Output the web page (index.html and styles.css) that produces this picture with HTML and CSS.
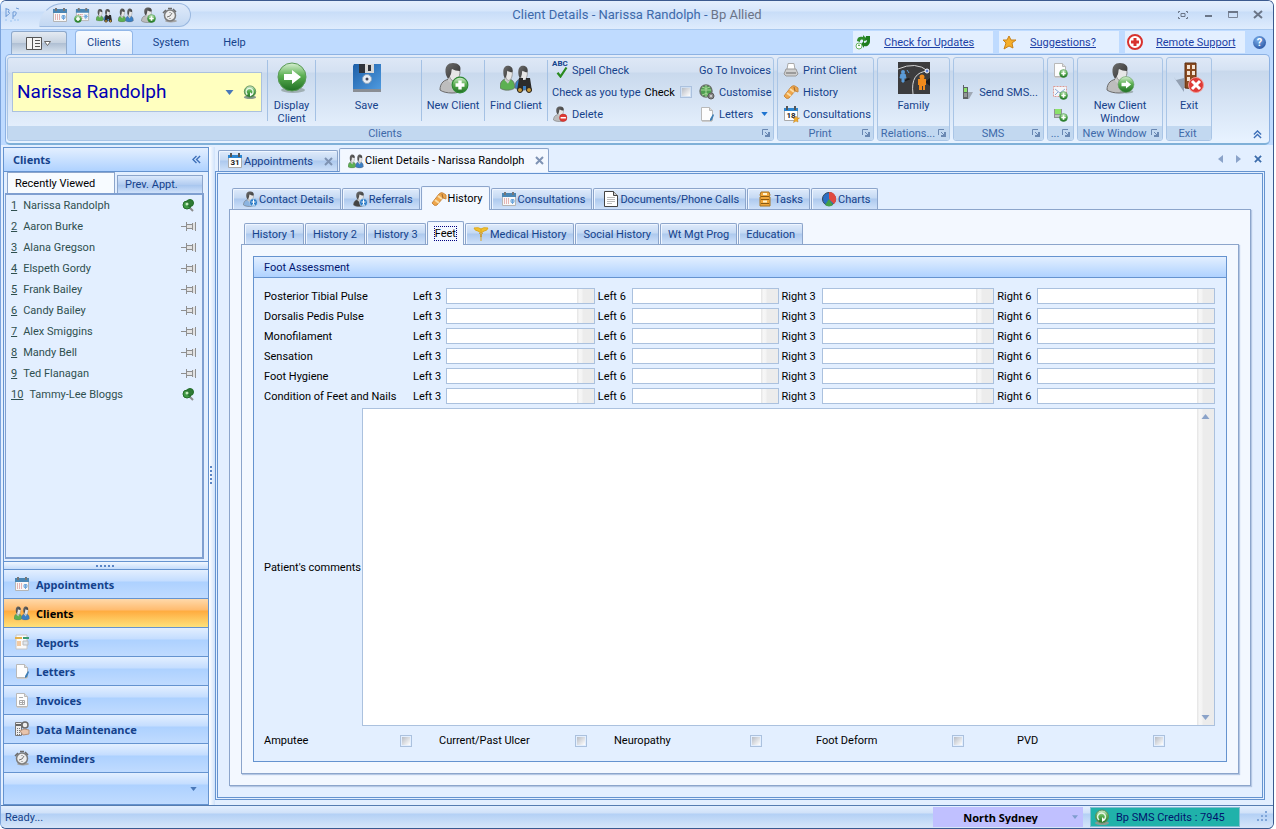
FILE: index.html
```html
<!DOCTYPE html>
<html lang="en">
<head>
    <meta charset="UTF-8">
    <meta name="viewport" content="width=device-width, initial-scale=1.0">
    <title>Client Details - Narissa Randolph - Bp Allied</title>
    <link rel="stylesheet" href="styles.css">
</head>
<body>
    <!-- Icon set -->
    <svg class="icon-defs" aria-hidden="true">
        <defs>
            <linearGradient id="gGreen" x1="0" y1="0" x2="0" y2="1">
                <stop offset="0" stop-color="#d9f0d4"/>
                <stop offset="0.45" stop-color="#5cb052"/>
                <stop offset="1" stop-color="#1f6f23"/>
            </linearGradient>
            <linearGradient id="gFloppy" x1="0" y1="0" x2="1" y2="1">
                <stop offset="0" stop-color="#1d5fa8"/>
                <stop offset="1" stop-color="#4f9be0"/>
            </linearGradient>
            <linearGradient id="gHair" x1="0" y1="0" x2="1" y2="1">
                <stop offset="0" stop-color="#6e6e6e"/>
                <stop offset="1" stop-color="#2e2e2e"/>
            </linearGradient>
        </defs>

        <symbol id="person" viewBox="0 0 32 32" preserveAspectRatio="none">
            <path d="M3 28c0-7 4-11 12-11s12 4 12 11c-5 4-19 4-24 0z" fill="currentColor" stroke="#6a6a6a"/>
            <path d="M11 14h8v5l-3 4-5-4z" fill="#c9c9c9"/>
            <path d="M12 6c3-4 11-3 11 4 0 5-3 9-6 9s-5-4-5-8z" fill="#e6e6e6" stroke="#8a8a8a"/>
            <path d="M9 13C7 4 11 1 16 1s9 3 7 8c-3 0-6-1-8-2-1 2 0 4-2 7l-2 3z" fill="url(#gHair)"/>
        </symbol>
        <symbol id="plus" viewBox="0 0 16 16">
            <circle cx="8" cy="8" r="7" fill="url(#gGreen)" stroke="#2f8a35"/>
            <path d="M8 4v8M4 8h8" stroke="#fff" stroke-width="3"/>
        </symbol>
        <symbol id="go" viewBox="0 0 32 32">
            <ellipse cx="17" cy="28" rx="12" ry="3" fill="#8a9a98" opacity="0.7"/>
            <circle cx="16" cy="15" r="14" fill="url(#gGreen)" stroke="#5a9a58"/>
            <path d="M8 12h8V8l9 7-9 7v-4H8z" fill="#fff"/>
        </symbol>
        <symbol id="minus" viewBox="0 0 16 16">
            <circle cx="8" cy="8" r="7" fill="#e03a34" stroke="#b92a25"/>
            <path d="M3 8h10" stroke="#fff" stroke-width="3"/>
        </symbol>
        <symbol id="person-add" viewBox="0 0 32 32">
            <use href="#person" color="#bdbdbd"/>
            <use href="#plus" x="14" y="14" width="18" height="18"/>
        </symbol>
        <symbol id="person-go" viewBox="0 0 32 32">
            <use href="#person" color="#bdbdbd"/>
            <use href="#go" x="13" y="14" width="18" height="18"/>
        </symbol>
        <symbol id="person-del" viewBox="0 0 32 32">
            <use href="#person" color="#bdbdbd"/>
            <use href="#minus" x="14" y="15" width="17" height="17"/>
        </symbol>
        <symbol id="person-phone" viewBox="0 0 32 32">
            <use href="#person"/>
            <circle cx="23" cy="23" r="8" fill="#2f7ec9" stroke="#fff"/>
            <path d="M23 17v10M19 22h8M20 28h6" stroke="#fff" stroke-width="2"/>
        </symbol>
        <symbol id="people" viewBox="0 0 32 32">
            <use href="#person" color="#5cb052" x="-2" y="2" width="21" height="29"/>
            <use href="#person" color="#3a7fc4" x="13" y="2" width="21" height="29"/>
        </symbol>
        <symbol id="find" viewBox="0 0 32 32">
            <use href="#person" color="#5cb052" x="-2" y="3" width="20" height="26"/>
            <use href="#person" color="#3a7fc4" x="13" y="3" width="20" height="26"/>
            <path d="M19 16h4v2h3v-2h4l2 13h-6v-5h-3v5h-6z" fill="#2b2b2b"/>
            <circle cx="20" cy="28" r="2.500" fill="#c79a3d" stroke="#222"/>
            <circle cx="29" cy="28" r="2.500" fill="#c79a3d" stroke="#222"/>
        </symbol>
        <symbol id="calendar" viewBox="0 0 16 16">
            <path d="M1.500 3.500h13v11h-13z" fill="#f8f8f8" stroke="#b5b5b5"/>
            <path d="M1 2h14v4H1z" fill="#4a86b4"/>
            <path d="M4 1v3M12 1v3" stroke="#777" stroke-width="2"/>
            <path d="M3 8h1M5 8h1M7 8h1M3 10h1M5 10h1M7 10h1M3 12h1M5 12h1M7 12h1" stroke="#d07070"/>
            <path d="M9 10h5M11.500 8v5M10 8l3 4M13 8l-3 4" stroke="#6ba5dc"/>
        </symbol>
        <symbol id="calendar-add" viewBox="0 0 16 16">
            <use href="#calendar" x="1" width="15" height="15"/>
            <use href="#plus" y="8" width="8" height="8"/>
        </symbol>
        <symbol id="day" viewBox="0 0 16 16">
            <path d="M1.500 2.500h13v12h-13z" fill="#fff" stroke="#aaa"/>
            <path d="M1 2h14v3H1z" fill="#2c86d0"/>
            <path d="M4 0v4M12 0v4" stroke="#555" stroke-width="2"/>
        </symbol>
        <symbol id="clock" viewBox="0 0 16 16">
            <ellipse cx="9" cy="14" rx="6" ry="1.500" fill="#a5a5a5"/>
            <circle cx="8" cy="8.500" r="5.500" fill="#ededed" stroke="#7c7c7c" stroke-width="1.500"/>
            <path d="M1 6l3-3M11 2l3 3M6 1.500h4" stroke="#6b6b6b" stroke-width="1.500"/>
            <path d="M5 10l3-1 2-3M8 5v1M8 11v1" stroke="#777" fill="none"/>
        </symbol>
        <symbol id="refresh" viewBox="0 0 16 16">
            <path d="M2 7c0-4 3-5 6-4V1l4 4-4 3V6C6 5 5 6 5 8z" fill="#2f8c2a"/>
            <path d="M11 2h4v5c0 4-3 6-6 5v2l-3-4 3-3v2c2 0 3-1 3-3l-2 1z" fill="#1f7d1e"/>
            <circle cx="4" cy="12" r="3" fill="#fff" stroke="#6bb566"/>
            <path d="M3 12l1-2 1 2z" fill="#2f8c2a"/>
        </symbol>
        <symbol id="sms-ball" viewBox="0 0 16 16">
            <ellipse cx="8" cy="14" rx="7" ry="2" fill="#8a9a90"/>
            <circle cx="8" cy="7.500" r="6.500" fill="url(#gGreen)" stroke="#5c8c5d"/>
            <path d="M5 11a4 4 0 1 1 5 0" fill="none" stroke="#e8f5e6" stroke-width="1.500"/>
            <path d="M8 8l3 3-3 2z" fill="#fff"/>
        </symbol>
        <symbol id="floppy" viewBox="0 0 32 32">
            <path d="M3 2h27v26H2V4z" fill="url(#gFloppy)"/>
            <path d="M2 27h28v3H2z" fill="#8a8e94"/>
            <path d="M8 2h15v9H8z" fill="#d8d8d8"/>
            <path d="M8 2h6v9H8zM17 3h3v6h-3z" fill="#30343c"/>
            <circle cx="16" cy="17" r="4.500" fill="#e8eef5" stroke="#8fa7c0"/>
            <circle cx="16" cy="17" r="1.500" fill="#445"/>
        </symbol>
        <symbol id="tick" viewBox="0 0 16 16">
            <path d="M2 9l4 5L14 2" fill="none" stroke="#2a8a1f" stroke-width="3"/>
        </symbol>
        <symbol id="globe" viewBox="0 0 16 16">
            <circle cx="7" cy="7" r="6" fill="#4f9f50" stroke="#6a726a" stroke-width="1.500"/>
            <path d="M2 6h10M7 1v12M3 3q4 3 8 0M3 11q4-3 8 0" fill="none" stroke="#a8d898"/>
            <circle cx="12" cy="12" r="3" fill="#8a8a8a" stroke="#5a5a5a"/>
            <circle cx="12" cy="12" r="1" fill="#ddd"/>
        </symbol>
        <symbol id="page" viewBox="0 0 16 16">
            <path d="M2.500 1.500h8l3 3v10h-11z" fill="#fdfdfd" stroke="#b9b9b9"/>
            <path d="M10.500 1.500v3h3" fill="#ddd" stroke="#b9b9b9"/>
            <path d="M3 15.500h10" stroke="#ccc"/>
        </symbol>
        <symbol id="page-pen" viewBox="0 0 16 16">
            <use href="#page"/>
            <path d="M15 9l-2 5-2 1v-2l3-5z" fill="#3f7fb5"/>
        </symbol>
        <symbol id="page-lines" viewBox="0 0 16 16">
            <path d="M1.500 0.500h9l4 4v11h-13z" fill="#fff" stroke="#444"/>
            <path d="M10.500 0.500v4h4" fill="#ccc" stroke="#444"/>
            <path d="M4 6.500h8M4 8.500h8M4 10.500h8M4 12.500h5" stroke="#bbb"/>
        </symbol>
        <symbol id="page-add" viewBox="0 0 16 16">
            <use href="#page"/>
            <use href="#plus" x="7" y="7" width="9" height="9"/>
        </symbol>
        <symbol id="mail-add" viewBox="0 0 16 16">
            <path d="M1.500 2.500h13v10h-13z" fill="#f4f6fa" stroke="#dc9a94" stroke-dasharray="2 1"/>
            <path d="M3 5l5 4 5-4M3 11l3-3" fill="none" stroke="#8ba9d4"/>
            <use href="#plus" x="7" y="7" width="9" height="9"/>
        </symbol>
        <symbol id="phone" viewBox="0 0 16 16">
            <path d="M9 8h5l-4 7H8z" fill="#9fa8b4"/>
            <path d="M4 1h1v2h4v12H4z" fill="#5d6364"/>
            <path d="M5 4h3v4H5z" fill="#8be26a"/>
            <path d="M5 10h3M5 12h3" stroke="#ccc"/>
        </symbol>
        <symbol id="phone-add" viewBox="0 0 16 16">
            <path d="M2 3h8v9H2z" fill="#8d9394"/>
            <path d="M3 3h6v5H3z" fill="#8be26a"/>
            <path d="M3 10h5" stroke="#eee"/>
            <use href="#plus" x="7" y="7" width="9" height="9"/>
        </symbol>
        <symbol id="printer" viewBox="0 0 16 16">
            <path d="M5 1.500h6l1 6H4z" fill="#fff" stroke="#aaa"/>
            <path d="M3 7h10l2 5-2 2H3l-2-2z" fill="#cfcfcf" stroke="#9a9a9a"/>
            <path d="M3 11h10" stroke="#888" stroke-width="1.500"/>
        </symbol>
        <symbol id="scroll" viewBox="0 0 16 16">
            <path d="M1 12L8 3q2-2 4-1l3 2v4l-3-1-6 7q-2 1-3 0z" fill="#efa64a" stroke="#c78a44"/>
            <path d="M4 9l4 3M7 5l4 3" stroke="#fbdca4" stroke-width="2"/>
            <path d="M11 3l1 4" stroke="#9a6a34"/>
        </symbol>
        <symbol id="family" viewBox="0 0 32 32">
            <path d="M0 0h32v32H0z" fill="#3c3c3e"/>
            <path d="M0 7Q18 -1 30 9M30 9Q12 10 15 32" fill="none" stroke="#d5d5d5"/>
            <path d="M5 20l5-4 3 1zM27 20l5-4v8z" fill="#1c1c1e"/>
            <circle cx="24" cy="15" r="2.500" fill="#f08a1c"/>
            <path d="M20 17h8v6h-1v5h-2v-4h-1v4h-3v-5h-1z" fill="#f08a1c"/>
            <circle cx="5" cy="10" r="2" fill="#5b9bd8"/>
            <path d="M3 12h4l1 4H6v4H4v-4H2zM9 8l2 3" fill="#5b9bd8" stroke="#5b9bd8"/>
            <circle cx="29" cy="9" r="2" fill="#5b7fd8" stroke="#fff"/>
        </symbol>
        <symbol id="exit" viewBox="0 0 32 32">
            <path d="M0 14l3 4 8-2v14z" fill="#93a0b2"/>
            <path d="M12 1h11v26l-11-1z" fill="#8a4a20" stroke="#5d2e10"/>
            <path d="M14 3h3v4h-3zM19 3h3v4h-3zM14 9h3v4h-3zM19 9h3v4h-3zM14 15h3v4h-3z" fill="#f5e4d4"/>
            <circle cx="23" cy="23" r="7.500" fill="#de3a36" stroke="#f09a94"/>
            <path d="M19 19l8 8M27 19l-8 8" stroke="#fff" stroke-width="3"/>
        </symbol>
        <symbol id="star" viewBox="0 0 16 16">
            <path d="M8 2l2 4h5l-4 3 1 5-4-2-5 3 2-6-3-3h4z" fill="#f5ae2a" stroke="#c98218"/>
        </symbol>
        <symbol id="lifebuoy" viewBox="0 0 16 16">
            <circle cx="8" cy="8" r="7" fill="#fff" stroke="#d8322e" stroke-width="2"/>
            <path d="M8 4v8M4 8h8" stroke="#d8322e" stroke-width="3"/>
        </symbol>
        <symbol id="pin-on" viewBox="0 0 13 13">
            <path d="M7 8l4 4" stroke="#8a8a8a" stroke-width="2"/>
            <circle cx="5" cy="6" r="4" fill="#3f9a45" stroke="#226d28"/>
            <circle cx="8" cy="4" r="3.500" fill="#2f7a35" stroke="#226d28"/>
            <circle cx="5" cy="5" r="1.500" fill="#c4ecbc"/>
        </symbol>
        <symbol id="pin-off" viewBox="0 0 15 11">
            <path d="M6 4h6v3H6zM12 2h2v7h-2z" fill="#e2e2e2"/>
            <path d="M0 5.500h5M5.500 1v9M6 3.500h6M6 7.500h6M11.500 2v7M14.500 1v9" stroke="#8f8f8f"/>
        </symbol>
        <symbol id="report" viewBox="0 0 16 16">
            <path d="M2 1h11v14H2z" fill="#fafafa" stroke="#c6c6c6"/>
            <path d="M1 3h7v2H1z" fill="#e3b04a"/>
            <path d="M9 3h6v2H9z" fill="#3c9c74"/>
            <path d="M3 7h4v5H3z" fill="#f2c9a0"/>
            <path d="M9 7h5v4H9z" fill="#dfe6ee" stroke="#bbb"/>
        </symbol>
        <symbol id="invoice" viewBox="0 0 16 16">
            <use href="#page"/>
            <path d="M5 5.500h4M5.500 8.500h5v4h-5zM8.500 9v4M6 10.500h5" fill="none" stroke="#aaa"/>
        </symbol>
        <symbol id="data" viewBox="0 0 16 16">
            <path d="M1.500 1.500h6v13h-6z" fill="#eee" stroke="#777"/>
            <path d="M2 4h5" stroke="#666" stroke-width="2"/>
            <path d="M3 7.500h4M3 9.500h4M3 11.500h4M3 13.500h4" stroke="#777" stroke-dasharray="1 1"/>
            <circle cx="11" cy="4" r="3" fill="#eee" stroke="#6a6a6a" stroke-width="1.500"/>
            <path d="M6 10l4-2 5 1v4l-6 1z" fill="#e8c4ac" stroke="#b59078"/>
        </symbol>
        <symbol id="caduceus" viewBox="0 0 16 16">
            <path d="M1 2q5-1 7 1 2-2 7-1-1 3-4 3l-3 2-3-2Q2 5 1 2z" fill="#f2c12e" stroke="#dca820"/>
            <path d="M8 3v12" stroke="#d8a422"/>
            <path d="M6 7q4 2 1 4M10 7q-4 2-1 4" fill="none" stroke="#c99b3a"/>
        </symbol>
        <symbol id="cabinet" viewBox="0 0 16 16">
            <path d="M4 1h8l1 3-1 2h1v9H3V6h1L3 4z" fill="#f0a63a" stroke="#a67424"/>
            <path d="M4 5.500h8M4 8.500h8M4 12.500h8" stroke="#8a5a12"/>
            <path d="M6 3h4M6 10.500h4" stroke="#fff2cc" stroke-width="2"/>
        </symbol>
        <symbol id="pie" viewBox="0 0 16 16">
            <circle cx="8" cy="8" r="6.500" fill="#2c6fc4" stroke="#345"/>
            <path d="M8 8V1a7 7 0 0 1 5 12z" fill="#e04a40"/>
            <path d="M8 8l4 6a7 7 0 0 1-8 0z" fill="#44a048"/>
        </symbol>
        <symbol id="launcher" viewBox="0 0 8 8">
            <path d="M0.500 6V0.500H6" fill="none" stroke="#6a88b2"/>
            <path d="M3 3h1v1h1v1h1V3h2v5H3V6h2V5H4V4H3z" fill="#6a88b2"/>
        </symbol>
        <symbol id="down" viewBox="0 0 8 5">
            <path d="M0 0h8L4 5z" fill="currentColor"/>
        </symbol>
        <symbol id="close" viewBox="0 0 9 9">
            <path d="M1 1l7 7M8 1L1 8" stroke="currentColor" stroke-width="2"/>
        </symbol>
        <symbol id="chevrons" viewBox="0 0 10 10">
            <path d="M5 1L1 5l4 4M9 1L5 5l4 4" fill="none" stroke="currentColor" stroke-width="1.500"/>
        </symbol>
    </svg>

    <div class="window">
        <header class="titlebar">
            <div class="titlebar-left">
                <svg class="app-logo" viewBox="0 0 20 16">
                    <path d="M2 1v9M2 2q5 0 2 3 4 1-2 4M9 12V5q4-1 3 2t-3 2M12 1l3 1" fill="none" stroke="#6f9bd6"/>
                    <path d="M1 13h2M6 14h2M10 13h2M14 12v2" stroke="#9cc4f2"/>
                </svg>
                <div class="quick-access">
                    <button type="button" aria-label="Appointments"><svg class="icon"><use href="#calendar"/></svg></button>
                    <button type="button" aria-label="New appointment"><svg class="icon"><use href="#calendar-add"/></svg></button>
                    <button type="button" aria-label="Find client"><svg class="icon"><use href="#find"/></svg></button>
                    <button type="button" aria-label="Clients"><svg class="icon"><use href="#people"/></svg></button>
                    <button type="button" aria-label="New client"><svg class="icon"><use href="#person-add"/></svg></button>
                    <button type="button" aria-label="Reminders"><svg class="icon"><use href="#clock"/></svg></button>
                </div>
            </div>
            <h1>Client Details - Narissa Randolph - <span>Bp Allied</span></h1>
            <div class="window-buttons">
                <button type="button" aria-label="Full screen"><svg viewBox="0 0 10 10"><path d="M0.500 3V1.500H2M8 1.500h1.500V3M0.500 7v1.500H2M8 8.500h1.500V7M3 3.500h4v3H3z" fill="none" stroke="#6b7688"/></svg></button>
                <button type="button" aria-label="Minimise"><svg viewBox="0 0 10 10"><path d="M2 6h7" stroke="#6b7688" stroke-width="2"/></svg></button>
                <button type="button" aria-label="Maximise"><svg viewBox="0 0 10 10"><path d="M0.500 2v5.500h9V2" fill="none" stroke="#7b8698"/><path d="M0 2h10" stroke="#6b7688" stroke-width="2"/></svg></button>
                <button type="button" aria-label="Close"><svg viewBox="0 0 10 10"><path d="M1 1l8 7M9 1L1 8" stroke="#6b7688" stroke-width="2"/></svg></button>
            </div>
        </header>

        <nav class="ribbon-tabs">
            <button type="button" class="app-menu" aria-label="Application menu">
                <svg viewBox="0 0 26 13">
                    <path d="M0.500 0.500h15v12H0.500zM6.500 0v13" fill="#f4f4f4" stroke="#555"/>
                    <path d="M9 3.500h5M9 6.500h5M9 9.500h5" stroke="#555"/>
                    <path d="M18.500 4.500h6l-3 4z" fill="#fff" stroke="#666"/>
                </svg>
            </button>
            <button type="button" class="ribbon-tab active">Clients</button>
            <button type="button" class="ribbon-tab">System</button>
            <button type="button" class="ribbon-tab">Help</button>
            <div class="support-links">
                <div class="support wide"><svg class="icon"><use href="#refresh"/></svg><a href="#">Check for Updates</a></div>
                <div class="support"><svg class="icon"><use href="#star"/></svg><a href="#">Suggestions?</a></div>
                <div class="support"><svg class="icon"><use href="#lifebuoy"/></svg><a href="#">Remote Support</a></div>
                <button type="button" class="help">?</button>
            </div>
        </nav>

        <section class="ribbon">
            <div class="group group-clients">
                <div class="group-body">
                    <div class="client-combo">
                        <select aria-label="Client">
                            <option>Narissa Randolph</option>
                        </select>
                        <svg class="arrow"><use href="#down"/></svg>
                        <svg class="icon"><use href="#sms-ball"/></svg>
                    </div>
                    <button type="button" class="big display-client"><svg><use href="#go"/></svg>Display<br>Client</button>
                    <button type="button" class="big save"><svg><use href="#floppy"/></svg>Save</button>
                    <button type="button" class="big new-client"><svg><use href="#person-add"/></svg>New Client</button>
                    <button type="button" class="big new-client"><svg><use href="#find"/></svg>Find Client</button>
                    <div class="small-stack tools">
                        <button type="button" class="spell"><span class="abc">ABC</span><svg class="icon"><use href="#tick"/></svg>Spell Check</button>
                        <label class="check-type">Check as you type <span>Check</span><input type="checkbox"></label>
                        <button type="button"><svg class="icon"><use href="#person-del"/></svg>Delete</button>
                    </div>
                    <div class="small-stack goto">
                        <button type="button">Go To Invoices</button>
                        <button type="button"><svg class="icon"><use href="#globe"/></svg>Customise</button>
                        <button type="button"><svg class="icon"><use href="#page-pen"/></svg>Letters <svg class="arrow"><use href="#down"/></svg></button>
                    </div>
                </div>
                <div class="group-caption"><span>Clients</span><svg><use href="#launcher"/></svg></div>
            </div>

            <div class="group group-print">
                <div class="group-body">
                    <div class="small-stack">
                        <button type="button"><svg class="icon"><use href="#printer"/></svg>Print Client</button>
                        <button type="button"><svg class="icon"><use href="#scroll"/></svg>History</button>
                        <button type="button"><span class="day-icon"><svg class="icon"><use href="#day"/></svg><b>18</b><svg class="mark"><use href="#star"/></svg></span>Consultations</button>
                    </div>
                </div>
                <div class="group-caption"><span>Print</span><svg><use href="#launcher"/></svg></div>
            </div>

            <div class="group group-family">
                <div class="group-body">
                    <button type="button" class="big"><svg><use href="#family"/></svg>Family</button>
                </div>
                <div class="group-caption"><span>Relations...</span><svg><use href="#launcher"/></svg></div>
            </div>

            <div class="group group-sms">
                <div class="group-body">
                    <button type="button" class="send"><svg class="icon"><use href="#phone"/></svg>Send SMS...</button>
                </div>
                <div class="group-caption"><span>SMS</span><svg><use href="#launcher"/></svg></div>
            </div>

            <div class="group group-more">
                <div class="group-body">
                    <div class="small-stack">
                        <button type="button" aria-label="New document"><svg class="icon"><use href="#page-add"/></svg></button>
                        <button type="button" aria-label="New email"><svg class="icon"><use href="#mail-add"/></svg></button>
                        <button type="button" aria-label="New phone call"><svg class="icon"><use href="#phone-add"/></svg></button>
                    </div>
                </div>
                <div class="group-caption"><span>...</span><svg><use href="#launcher"/></svg></div>
            </div>

            <div class="group group-window">
                <div class="group-body">
                    <button type="button" class="big"><svg><use href="#person-go"/></svg>New Client<br>Window</button>
                </div>
                <div class="group-caption"><span>New Window</span><svg><use href="#launcher"/></svg></div>
            </div>

            <div class="group group-exit">
                <div class="group-body">
                    <button type="button" class="big"><svg><use href="#exit"/></svg>Exit</button>
                </div>
                <div class="group-caption"><span>Exit</span></div>
            </div>

            <button type="button" class="collapse-ribbon" aria-label="Collapse ribbon"><svg><use href="#chevrons"/></svg></button>
        </section>

        <main class="workspace">
            <aside class="sidebar">
                <div class="sidebar-header"><h2>Clients</h2><button type="button" aria-label="Collapse"><svg><use href="#chevrons"/></svg></button></div>
                <div class="sidebar-tabs">
                    <button type="button" class="active">Recently Viewed</button>
                    <button type="button">Prev. Appt.</button>
                </div>
                <ul class="recent">
                    <li><u>1</u><a href="#">Narissa Randolph</a><svg class="pin on"><use href="#pin-on"/></svg></li>
                    <li><u>2</u><a href="#">Aaron Burke</a><svg class="pin"><use href="#pin-off"/></svg></li>
                    <li><u>3</u><a href="#">Alana Gregson</a><svg class="pin"><use href="#pin-off"/></svg></li>
                    <li><u>4</u><a href="#">Elspeth Gordy</a><svg class="pin"><use href="#pin-off"/></svg></li>
                    <li><u>5</u><a href="#">Frank Bailey</a><svg class="pin"><use href="#pin-off"/></svg></li>
                    <li><u>6</u><a href="#">Candy Bailey</a><svg class="pin"><use href="#pin-off"/></svg></li>
                    <li><u>7</u><a href="#">Alex Smiggins</a><svg class="pin"><use href="#pin-off"/></svg></li>
                    <li><u>8</u><a href="#">Mandy Bell</a><svg class="pin"><use href="#pin-off"/></svg></li>
                    <li><u>9</u><a href="#">Ted Flanagan</a><svg class="pin"><use href="#pin-off"/></svg></li>
                    <li><u>10</u><a href="#">Tammy-Lee Bloggs</a><svg class="pin on"><use href="#pin-on"/></svg></li>
                </ul>
                <div class="grip"></div>
                <nav class="nav-bar">
                    <button type="button"><svg class="icon"><use href="#calendar"/></svg>Appointments</button>
                    <button type="button" class="active"><svg class="icon"><use href="#people"/></svg>Clients</button>
                    <button type="button"><svg class="icon"><use href="#report"/></svg>Reports</button>
                    <button type="button"><svg class="icon"><use href="#page-pen"/></svg>Letters</button>
                    <button type="button"><svg class="icon"><use href="#invoice"/></svg>Invoices</button>
                    <button type="button"><svg class="icon"><use href="#data"/></svg>Data Maintenance</button>
                    <button type="button"><svg class="icon"><use href="#clock"/></svg>Reminders</button>
                    <div class="nav-more"><svg class="arrow"><use href="#down"/></svg></div>
                </nav>
            </aside>

            <div class="splitter"></div>

            <div class="documents">
                <div class="doc-tabs">
                    <button type="button" class="tab"><span class="day-icon"><svg class="icon"><use href="#day"/></svg><b>31</b></span>Appointments<svg class="close"><use href="#close"/></svg></button>
                    <button type="button" class="tab active"><svg class="icon"><use href="#people"/></svg>Client Details - Narissa Randolph<svg class="close"><use href="#close"/></svg></button>
                    <div class="doc-nav">
                        <svg viewBox="0 0 5 8"><path d="M5 0v8L0 4z" fill="#8ba3c9"/></svg>
                        <svg viewBox="0 0 5 8"><path d="M0 0v8l5-4z" fill="#8ba3c9"/></svg>
                        <svg class="close"><use href="#close"/></svg>
                    </div>
                </div>

                <div class="doc-frame">
                    <div class="tabs">
                        <button type="button" class="tab"><svg class="icon blue"><use href="#person-phone"/></svg>Contact Details</button>
                        <button type="button" class="tab"><svg class="icon dark"><use href="#person-phone"/></svg>Referrals</button>
                        <button type="button" class="tab active"><svg class="icon"><use href="#scroll"/></svg>History</button>
                        <button type="button" class="tab"><svg class="icon"><use href="#calendar"/></svg>Consultations</button>
                        <button type="button" class="tab"><svg class="icon"><use href="#page-lines"/></svg>Documents/Phone Calls</button>
                        <button type="button" class="tab"><svg class="icon"><use href="#cabinet"/></svg>Tasks</button>
                        <button type="button" class="tab"><svg class="icon"><use href="#pie"/></svg>Charts</button>
                    </div>
                    <div class="panel">
                        <div class="tabs">
                            <button type="button" class="tab">History 1</button>
                            <button type="button" class="tab">History 2</button>
                            <button type="button" class="tab">History 3</button>
                            <button type="button" class="tab active"><span class="focused">Feet</span></button>
                            <button type="button" class="tab"><svg class="icon"><use href="#caduceus"/></svg>Medical History</button>
                            <button type="button" class="tab">Social History</button>
                            <button type="button" class="tab">Wt Mgt Prog</button>
                            <button type="button" class="tab">Education</button>
                        </div>
                        <div class="panel">
                            <form class="assessment">
                                <h3>Foot Assessment</h3>
                                <div class="readings">
                                    <span>Posterior Tibial Pulse</span>
                                    <label for="ptp-l3">Left 3</label><input type="text" id="ptp-l3">
                                    <label for="ptp-l6">Left 6</label><input type="text" id="ptp-l6">
                                    <label for="ptp-r3">Right 3</label><input type="text" id="ptp-r3">
                                    <label for="ptp-r6">Right 6</label><input type="text" id="ptp-r6">

                                    <span>Dorsalis Pedis Pulse</span>
                                    <label for="dpp-l3">Left 3</label><input type="text" id="dpp-l3">
                                    <label for="dpp-l6">Left 6</label><input type="text" id="dpp-l6">
                                    <label for="dpp-r3">Right 3</label><input type="text" id="dpp-r3">
                                    <label for="dpp-r6">Right 6</label><input type="text" id="dpp-r6">

                                    <span>Monofilament</span>
                                    <label for="mono-l3">Left 3</label><input type="text" id="mono-l3">
                                    <label for="mono-l6">Left 6</label><input type="text" id="mono-l6">
                                    <label for="mono-r3">Right 3</label><input type="text" id="mono-r3">
                                    <label for="mono-r6">Right 6</label><input type="text" id="mono-r6">

                                    <span>Sensation</span>
                                    <label for="sens-l3">Left 3</label><input type="text" id="sens-l3">
                                    <label for="sens-l6">Left 6</label><input type="text" id="sens-l6">
                                    <label for="sens-r3">Right 3</label><input type="text" id="sens-r3">
                                    <label for="sens-r6">Right 6</label><input type="text" id="sens-r6">

                                    <span>Foot Hygiene</span>
                                    <label for="hyg-l3">Left 3</label><input type="text" id="hyg-l3">
                                    <label for="hyg-l6">Left 6</label><input type="text" id="hyg-l6">
                                    <label for="hyg-r3">Right 3</label><input type="text" id="hyg-r3">
                                    <label for="hyg-r6">Right 6</label><input type="text" id="hyg-r6">

                                    <span>Condition of Feet and Nails</span>
                                    <label for="cond-l3">Left 3</label><input type="text" id="cond-l3">
                                    <label for="cond-l6">Left 6</label><input type="text" id="cond-l6">
                                    <label for="cond-r3">Right 3</label><input type="text" id="cond-r3">
                                    <label for="cond-r6">Right 6</label><input type="text" id="cond-r6">
                                </div>
                                <div class="comments">
                                    <label for="comments">Patient's comments</label>
                                    <div class="comments-box">
                                        <textarea id="comments"></textarea>
                                        <div class="scrollbar">
                                            <svg class="up"><use href="#down"/></svg>
                                            <svg><use href="#down"/></svg>
                                        </div>
                                    </div>
                                </div>
                                <div class="ticks">
                                    <label>Amputee<input type="checkbox"></label>
                                    <label>Current/Past Ulcer<input type="checkbox"></label>
                                    <label>Neuropathy<input type="checkbox"></label>
                                    <label>Foot Deform<input type="checkbox"></label>
                                    <label>PVD<input type="checkbox"></label>
                                </div>
                            </form>
                        </div>
                    </div>
                </div>
            </div>
        </main>

        <footer class="statusbar">
            <span>Ready...</span>
            <div class="location">
                <select aria-label="Location">
                    <option>North Sydney</option>
                </select>
                <svg class="arrow"><use href="#down"/></svg>
            </div>
            <div class="credits"><svg class="icon"><use href="#sms-ball"/></svg>Bp SMS Credits : 7945</div>
            <svg class="resize" viewBox="0 0 12 12"><path d="M9 1h2M9 5h2M9 9h2M5 5h2M5 9h2M1 9h2" stroke="#7fa5d8" stroke-width="2"/></svg>
        </footer>
    </div>
</body>
</html>
```
FILE: styles.css
```css
* {
    box-sizing: border-box;
}

body {
    margin: 0;
    background: #ffffff;
    color: #15428b;
    font-family: Roboto, "Noto Sans", sans-serif;
    font-size: 11px;
    line-height: 13px;
}

button,
input,
select,
textarea {
    font: inherit;
    color: inherit;
    margin: 0;
    padding: 0;
    border: none;
    background: none;
}

button {
    white-space: nowrap;
}

h1,
h2,
h3,
ul {
    margin: 0;
    padding: 0;
    font-size: 11px;
    font-weight: normal;
}

.icon-defs {
    position: absolute;
    width: 0;
    height: 0;
}

.icon {
    width: 16px;
    height: 16px;
    flex: none;
    color: #bdbdbd;
}

.icon.blue {
    color: #8cb4e0;
}

.icon.dark {
    color: #444444;
}

.arrow {
    width: 7px;
    height: 4px;
    flex: none;
    color: #4a78b8;
}

input[type="checkbox"] {
    appearance: none;
    width: 12px;
    height: 12px;
    flex: none;
    border: 1px solid #abc1de;
    background: linear-gradient(135deg, #b8bcc4, #ffffff) content-box #f4f4f4;
    padding: 1px;
}

.window {
    display: flex;
    flex-direction: column;
    height: 100vh;
    margin-right: 2px;
    border: 1px solid #3b5a8f;
    border-left-color: #7ba3dc;
    border-radius: 6px;
    background: #bfdbff;
    overflow: hidden;
}

/* Title bar */
.titlebar {
    display: grid;
    grid-template-columns: 1fr auto 1fr;
    align-items: center;
    height: 29px;
    flex: none;
    background: linear-gradient(#e4effd 0, #d6e6fb 10px, #c8ddf8 11px, #dfecfd 28px);
    border-bottom: 1px solid #a8c8ef;
}

.titlebar-left {
    display: flex;
    align-items: center;
}

.app-logo {
    width: 20px;
    height: 16px;
    margin-left: 3px;
}

.quick-access {
    display: flex;
    align-items: center;
    gap: 6px;
    height: 24px;
    margin-left: 15px;
    padding: 0 12px;
    border: 1px solid #9ab8e0;
    border-left-color: transparent;
    border-radius: 24px 12px 12px 0;
    background: linear-gradient(#dfeafa, #c3d8f2);
}

.quick-access button,
.window-buttons button {
    display: flex;
}

.titlebar h1 {
    font-size: 13px;
    line-height: 16px;
    color: #3e6aaa;
}

.titlebar h1 span {
    color: #6b7487;
}

.window-buttons {
    display: flex;
    justify-content: flex-end;
    gap: 15px;
    margin-right: 10px;
}

.window-buttons svg {
    width: 10px;
    height: 10px;
}

/* Ribbon tabs */
.ribbon-tabs {
    display: flex;
    align-items: flex-end;
    height: 24px;
    flex: none;
    padding-left: 10px;
}

.app-menu {
    width: 56px;
    height: 23px;
    margin-right: 8px;
    border: 1px solid #8ea9cc;
    border-bottom: none;
    border-radius: 3px 3px 0 0;
    background: linear-gradient(#e4eaf2, #c6d2e1 50%, #afbfd3 51%, #dbe6f2);
}

.app-menu svg {
    width: 26px;
    height: 13px;
    display: block;
    margin: 0 auto;
}

.ribbon-tab {
    height: 24px;
    padding: 0 17px;
}

.ribbon-tab.active {
    padding: 0 11px;
    margin-right: 3px;
    border: 1px solid #92b7e8;
    border-bottom: none;
    border-radius: 4px 4px 0 0;
    background: linear-gradient(#f6faff, #e4edf9);
}

.support-links {
    display: flex;
    align-items: center;
    gap: 6px;
    height: 22px;
    margin: auto 0 auto auto;
}

.support {
    display: flex;
    align-items: center;
    gap: 13px;
    width: 120px;
    height: 22px;
    padding-left: 2px;
    background: #e3efff;
}

.support.wide {
    width: 140px;
}

.support a {
    color: #1d3fa5;
}

.help {
    width: 13px;
    height: 13px;
    margin: 0 7px 0 2px;
    border-radius: 50%;
    background: radial-gradient(circle at 40% 30%, #7cb1ec, #173f92);
    color: #ffffff;
    font-weight: bold;
}

/* Ribbon */
.ribbon {
    position: relative;
    display: flex;
    gap: 3px;
    height: 91px;
    flex: none;
    margin: 0 3px 0 4px;
    padding: 2px 57px 2px 1px;
    border: 1px solid #8db2e3;
    border-bottom: 2px solid #7fb0d8;
    border-radius: 5px;
    background: linear-gradient(#e3ecf9, #d5e2f3 15px, #c8d8ec 16px, #e7f2ff 85px);
}

.group {
    display: flex;
    flex-direction: column;
    border: 1px solid #a9c5e6;
    border-radius: 3px;
    background: linear-gradient(#dee8f6, #d4e1f2 14px, #c9d9ed 15px, #e4effc 70px);
    overflow: hidden;
}

.group-body {
    display: flex;
    flex: 1;
    min-height: 0;
}

.group-caption {
    display: flex;
    align-items: center;
    height: 14px;
    flex: none;
    padding-right: 3px;
    background: #c2d8f0;
    color: #3e6aaa;
    white-space: nowrap;
}

.group-caption span {
    flex: 1;
    text-align: center;
}

.group-caption svg {
    width: 8px;
    height: 8px;
    flex: none;
}

.group-clients {
    flex: 1;
}

.group-print {
    width: 97px;
}

.group-family {
    width: 73px;
}

.group-sms {
    width: 91px;
}

.group-more {
    width: 27px;
}

.group-window {
    width: 86px;
}

.group-exit {
    width: 46px;
}

.big {
    display: flex;
    flex-direction: column;
    align-items: center;
    justify-content: flex-start;
    width: 100%;
    padding-top: 4px;
    white-space: normal;
}

.big svg {
    width: 32px;
    height: 32px;
    flex: none;
    margin-bottom: 5px;
}

.group-clients .big {
    flex: none;
    margin: 2px 0 5px;
    padding-top: 2px;
    border-right: 1px solid #a4c1e4;
}

.group-clients .display-client {
    width: 49px;
    border-left: 1px solid #a4c1e4;
}

.group-clients .save {
    width: 106px;
    padding-right: 4px;
}

.group-clients .new-client {
    width: 63px;
}

.client-combo {
    display: flex;
    align-items: center;
    width: 250px;
    height: 40px;
    margin: 14px 5px 0 4px;
    padding-right: 4px;
    border: 1px solid #abc1de;
    background: #ffffbf;
}

.client-combo select {
    flex: 1;
    min-width: 0;
    padding-left: 4px;
    appearance: none;
    font-size: 19px;
    line-height: 24px;
    color: #0000b4;
}

.client-combo .arrow {
    width: 9px;
    height: 5px;
    margin-right: 9px;
}

.client-combo .icon {
    width: 14px;
    height: 14px;
}

.small-stack {
    display: flex;
    flex-direction: column;
    align-items: flex-start;
    gap: 6px;
    padding: 4px 0 0 4px;
}

.group-print .small-stack {
    padding-left: 5px;
}

.small-stack button,
.check-type,
.send {
    display: flex;
    align-items: center;
    gap: 4px;
    height: 16px;
    white-space: nowrap;
}

.tools {
    position: relative;
    width: 147px;
}

.check-type span {
    color: #000000;
}

.check-type input {
    margin-left: 1px;
}

.spell .icon {
    width: 12px;
    height: 12px;
    margin: 4px 0 0 4px;
}

.abc {
    position: absolute;
    top: 2px;
    left: 4px;
    font-size: 8px;
    line-height: 8px;
    font-weight: bold;
}

.goto .arrow {
    margin-left: 4px;
    color: #1e74d0;
}

.day-icon {
    position: relative;
    display: flex;
}

.day-icon b {
    position: absolute;
    top: 5px;
    width: 16px;
    text-align: center;
    font-size: 8px;
    line-height: 10px;
    color: #222222;
}

.day-icon .mark {
    position: absolute;
    right: -1px;
    bottom: -1px;
    width: 8px;
    height: 8px;
}

.send {
    margin: auto;
}

.collapse-ribbon {
    position: absolute;
    right: 7px;
    bottom: 4px;
    transform: rotate(90deg);
}

.collapse-ribbon svg,
.sidebar-header svg {
    display: block;
    width: 9px;
    height: 9px;
    color: #3d6fb8;
}

/* Workspace */
.workspace {
    display: flex;
    flex: 1;
    min-height: 0;
    padding: 2px 8px 0 2px;
    background: #e3efff;
}

.sidebar {
    display: flex;
    flex-direction: column;
    width: 206px;
    flex: none;
    border: 1px solid #6593cf;
}

.sidebar-header {
    display: flex;
    align-items: center;
    justify-content: space-between;
    height: 24px;
    padding: 0 7px 0 9px;
    border-bottom: 1px solid #6593cf;
    background: linear-gradient(#e3efff, #afd2ff);
}

.sidebar-header h2 {
    font-family: "Noto Sans", sans-serif;
    font-weight: bold;
}

.sidebar-tabs {
    display: flex;
    align-items: flex-end;
    gap: 2px;
    height: 21px;
    padding: 0 3px;
}

.sidebar-tabs button {
    width: 86px;
    height: 18px;
    padding-left: 7px;
    border: 1px solid #8ca5cb;
    border-bottom: none;
    background: linear-gradient(#dbe9fc, #b3cdf1 50%, #a5c4ee 51%, #cfe1fa);
    text-align: left;
}

.sidebar-tabs .active {
    width: 108px;
    height: 21px;
    background: #f7fbff;
    color: #000000;
}

.recent {
    flex: 1;
    margin: 0 4px 2px 1px;
    border: 2px solid #7f9fd0;
    border-left-width: 1px;
    background: #e3efff;
    list-style: none;
}

.recent li {
    display: flex;
    align-items: center;
    gap: 6px;
    height: 21px;
    padding: 0 6px 0 5px;
    color: #2f4f4f;
}

.recent a {
    flex: 1;
    color: #2f4f4f;
    text-decoration: none;
}

.pin {
    width: 15px;
    height: 11px;
}

.pin.on {
    width: 13px;
    height: 13px;
    margin-right: 1px;
}

.grip {
    height: 8px;
    flex: none;
    border-top: 1px solid #6593cf;
    background: linear-gradient(#f1f7ff, #c4dcfb);
}

.grip::after {
    content: "";
    display: block;
    width: 20px;
    height: 2px;
    margin: 3px auto 0;
    background: repeating-linear-gradient(90deg, #5a85c5 0 2px, transparent 2px 4px);
}

.nav-bar button,
.nav-more {
    display: flex;
    align-items: center;
    gap: 6px;
    width: 100%;
    height: 29px;
    padding-left: 10px;
    border-top: 1px solid #6593cf;
    background: linear-gradient(#e3efff, #c4ddff 11px, #add1ff 12px, #c0dbff);
    font-family: "Noto Sans", sans-serif;
    font-weight: bold;
}

.nav-bar .active {
    background: linear-gradient(#ffd9aa, #ffbb6e 11px, #ffab3f 12px, #fee17a);
    color: #000000;
}

.nav-bar .nav-more {
    justify-content: flex-end;
    height: 32px;
    padding-right: 11px;
}

.splitter {
    width: 6px;
    flex: none;
    background: repeating-linear-gradient(#5a85c5 0 2px, transparent 2px 4px) 1px 50% / 2px 20px no-repeat, linear-gradient(90deg, #ffffff, #cfe2fb);
}

.documents {
    display: flex;
    flex-direction: column;
    flex: 1;
    min-width: 0;
    padding-bottom: 5px;
}

.doc-tabs,
.tabs {
    display: flex;
    align-items: flex-end;
    gap: 1px;
    flex: none;
}

.doc-tabs {
    height: 24px;
    padding: 0 3px;
}

.tab {
    display: flex;
    align-items: center;
    gap: 1px;
    height: 21px;
    padding: 0 7px;
    border: 1px solid #8ca5cb;
    border-bottom: none;
    border-radius: 2px 2px 0 0;
    background: linear-gradient(#dfebfb, #c5d9f3 9px, #adc9ee 10px, #cfe1f9);
    box-shadow: inset 1px 1px 0 #eef5ff;
}

.tab.active {
    position: relative;
    height: 24px;
    margin-bottom: -1px;
    background: #f3f8ff;
    color: #000000;
}

.close {
    width: 9px;
    height: 9px;
    margin-left: 10px;
    color: #7e93b3;
}

.doc-tabs .tab {
    padding: 0 4px 0 8px;
}

.doc-nav {
    display: flex;
    align-items: center;
    gap: 13px;
    margin: auto 0 auto auto;
}

.doc-nav svg {
    width: 5px;
    height: 8px;
}

.doc-nav .close {
    width: 8px;
    margin: 0;
    color: #3b6cab;
}

.doc-frame {
    display: flex;
    flex-direction: column;
    flex: 1;
    min-height: 0;
    padding: 11px;
    border: 3px double #6593cf;
    background: #e3efff;
}

.tabs {
    height: 23px;
}

.doc-frame > .tabs {
    height: 24px;
    padding-left: 3px;
}

.doc-frame > .tabs .tab {
    padding: 0 6px 0 9px;
}

.panel {
    display: flex;
    flex-direction: column;
    flex: 1;
    min-height: 0;
    padding: 11px;
    border: 1px solid #8ca5cb;
    background: #f3f8ff;
    box-shadow: 1px 1px 1px #b5c8e4;
}

.panel > .tabs {
    padding-left: 3px;
}

.focused {
    outline: 1px dotted #000080;
}

/* Foot assessment */
.assessment {
    display: flex;
    flex-direction: column;
    flex: 1;
    min-height: 0;
    border: 1px solid #6593cf;
    background: #e3efff;
    color: #000000;
}

.assessment h3 {
    height: 21px;
    padding: 4px 10px;
    border-bottom: 1px solid #6593cf;
    background: linear-gradient(#e3efff, #afd2ff);
    color: #00156e;
}

.readings {
    display: grid;
    grid-template-columns: 149px 33px 149fr 37px 147fr 43px 173fr 43px 178fr;
    align-items: center;
    row-gap: 4px;
    padding: 10px 11px 0 10px;
}

.readings label + input + label {
    padding-left: 3px;
}

.readings input {
    width: 100%;
    height: 16px;
    border: 1px solid #abc1de;
    background: linear-gradient(90deg, #e8e8e8 1px, #f7f7f7 2px, #f4f4f4 5px, #ececec 6px) right / 17px 100% no-repeat #ffffff;
}

.comments {
    display: flex;
    align-items: center;
    flex: 1;
    min-height: 0;
    padding: 4px 11px 0 10px;
}

.comments label {
    width: 98px;
    flex: none;
    white-space: nowrap;
}

.comments-box {
    display: flex;
    flex: 1;
    align-self: stretch;
    border: 1px solid #abc1de;
    background: #ffffff;
}

.comments-box textarea {
    flex: 1;
    resize: none;
}

.scrollbar {
    display: flex;
    flex-direction: column;
    justify-content: space-between;
    align-items: center;
    width: 17px;
    padding: 5px 0;
    background: linear-gradient(90deg, #e8e8e8 1px, #f7f7f7 2px, #f4f4f4 5px, #ececec 6px);
}

.scrollbar svg {
    width: 9px;
    height: 5px;
    color: #8ba3c9;
}

.scrollbar .up {
    transform: rotate(180deg);
}

.ticks {
    display: grid;
    grid-template-columns: 175fr 175fr 202fr 201fr 198fr;
    padding: 8px 11px 14px 10px;
}

.ticks label {
    display: grid;
    grid-template-columns: 136px 12px;
    align-items: center;
}

/* Status bar */
.statusbar {
    display: flex;
    align-items: center;
    height: 23px;
    flex: none;
    padding: 0 5px 0 4px;
    border-top: 1px solid #567db1;
    background: linear-gradient(#e3efff, #d0e1f8 7px, #b3d0f5 8px, #d7e6f9);
}

.location {
    display: flex;
    align-items: center;
    width: 150px;
    height: 20px;
    margin-left: auto;
    padding-right: 5px;
    background: #c0c0ff;
}

.location select {
    flex: 1;
    appearance: none;
    padding-right: 4px;
    text-align: center;
    text-align-last: center;
    font-family: "Noto Sans", sans-serif;
    font-weight: bold;
    color: #000000;
}

.location .arrow {
    width: 6px;
    color: #7f9dcf;
}

.credits {
    display: flex;
    align-items: center;
    gap: 6px;
    width: 150px;
    height: 20px;
    margin-left: 7px;
    padding-left: 3px;
    border: 1px solid #7fbfd0;
    background: #20b2aa;
    color: #00156e;
}

.resize {
    width: 12px;
    height: 12px;
    margin-left: 16px;
}
```
